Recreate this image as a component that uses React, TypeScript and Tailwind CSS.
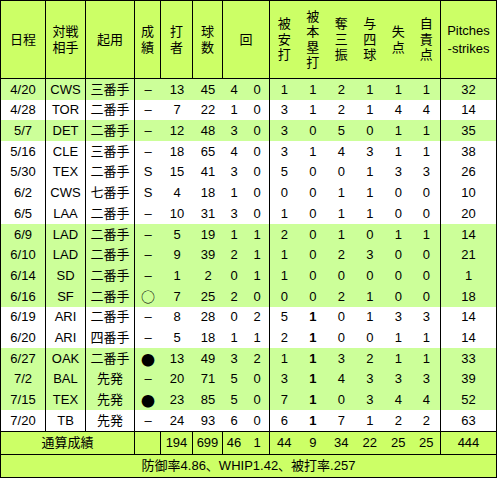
const rows: [string, string, string, string, number[], boolean][] = [
  ['4/20', 'CWS', '三番手', '–', [13, 45, 4, 0, 1, 1, 2, 1, 1, 1, 32], true],
  ['4/28', 'TOR', '二番手', '–', [7, 22, 1, 0, 3, 1, 2, 1, 4, 4, 14], false],
  ['5/7', 'DET', '二番手', '–', [12, 48, 3, 0, 3, 0, 5, 0, 1, 1, 35], true],
  ['5/16', 'CLE', '三番手', '–', [18, 65, 4, 0, 3, 1, 4, 3, 1, 1, 38], false],
  ['5/30', 'TEX', '二番手', 'S', [15, 41, 3, 0, 5, 0, 0, 1, 3, 3, 26], false],
  ['6/2', 'CWS', '七番手', 'S', [4, 18, 1, 0, 0, 0, 1, 1, 0, 0, 10], false],
  ['6/5', 'LAA', '二番手', '–', [10, 31, 3, 0, 1, 0, 1, 1, 0, 0, 20], false],
  ['6/9', 'LAD', '二番手', '–', [5, 19, 1, 1, 2, 0, 1, 0, 1, 1, 14], true],
  ['6/10', 'LAD', '二番手', '–', [9, 39, 2, 1, 1, 0, 2, 3, 0, 0, 21], true],
  ['6/14', 'SD', '二番手', '–', [1, 2, 0, 1, 1, 0, 0, 0, 0, 0, 1], true],
  ['6/16', 'SF', '二番手', '○', [7, 25, 2, 0, 0, 0, 2, 1, 0, 0, 18], true],
  ['6/19', 'ARI', '二番手', '–', [8, 28, 0, 2, 5, 1, 0, 1, 3, 3, 14], false],
  ['6/20', 'ARI', '四番手', '–', [5, 18, 1, 1, 2, 1, 0, 0, 1, 1, 14], false],
  ['6/27', 'OAK', '二番手', '●', [13, 49, 3, 2, 1, 1, 3, 2, 1, 1, 33], true],
  ['7/2', 'BAL', '先発', '–', [20, 71, 5, 0, 3, 1, 4, 3, 3, 3, 39], true],
  ['7/15', 'TEX', '先発', '●', [23, 85, 5, 0, 7, 1, 0, 3, 4, 4, 52], true],
  ['7/20', 'TB', '先発', '–', [24, 93, 6, 0, 6, 1, 7, 1, 2, 2, 63], false],
];

// columns after which a line is drawn in the body (index into the 15 cells)
const bodyLines = [0, 1, 2, 7, 13, 14];
const totalLines = [3, 4, 5, 7, 13, 14];

const heads: [string, boolean][] = [
  ['被\n安\n打', false],
  ['被\n本\n塁\n打', false],
  ['奪\n三\n振', false],
  ['与\n四\n球', false],
  ['失\n点', false],
  ['自\n責\n点', true],
];

export default function App() {
  const cell = 'flex items-center justify-center border-black';
  const head = `${cell} bg-[#ccff66] border-b whitespace-pre-line text-center leading-[15.5px]`;

  return (
    <div
      className="w-[497px] h-[478px] grid grid-cols-[45px_40px_49px_26px_32px_30px_22px_25px_repeat(6,28.5px)_56px] grid-rows-[78px_repeat(17,minmax(0,1fr))_24px_23px] border-l border-t border-black text-[13px] text-black"
      style={{ fontFamily: '"Liberation Sans", "Noto Sans CJK JP", sans-serif' }}
    >
      {/* Header */}
      <div className={`${head} border-r`}>日程</div>
      <div className={`${head} border-r`}>{'対戦\n相手'}</div>
      <div className={`${head} border-r`}>起用</div>
      <div className={`${head} border-r`}>{'成\n績'}</div>
      <div className={`${head} border-r`}>{'打\n者'}</div>
      <div className={`${head} border-r`}>{'球\n数'}</div>
      <div className={`${head} border-r col-span-2`}>回</div>
      {heads.map(([t, line]) => (
        <div key={t} className={`${head} ${line ? 'border-r' : ''}`}>
          {t}
        </div>
      ))}
      <div className={`${head} border-r leading-[18px]`}>{'Pitches\n-strikes'}</div>

      {/* Games */}
      {rows.map(([date, opp, role, res, v, green], ri) => {
        const bg = green ? 'bg-[#ccff99]' : 'bg-white';
        const cells: React.ReactNode[] = [date, opp, role, res, ...v];
        return cells.map((c, ci) => (
          <div
            key={`${ri}-${ci}`}
            className={`${cell} ${bg} ${bodyLines.includes(ci) ? 'border-r' : ''} ${
              ci === 9 && ri >= 11 ? 'font-bold' : ''
            }`}
          >
            {c === '○' || c === '●' ? (
              <span
                className="text-[14px] leading-none"
                style={{ fontFamily: '"Noto Sans CJK JP", sans-serif' }}
              >
                {c}
              </span>
            ) : (
              c
            )}
          </div>
        ));
      })}

      {/* Totals */}
      <div className={`${cell} bg-[#ccff66] border-t border-b border-r col-span-3`}>通算成績</div>
      {['', 194, 699, 46, 1, 44, 9, 34, 22, 25, 25, 444].map((c, i) => (
        <div
          key={`t${i}`}
          className={`${cell} bg-[#ccff66] border-t border-b ${totalLines.includes(i + 3) ? 'border-r' : ''}`}
        >
          {c}
        </div>
      ))}

      {/* Summary */}
      <div className={`${cell} bg-[#ccff66] border-b border-r col-span-15`}>
        防御率4.86、WHIP1.42、被打率.257
      </div>
    </div>
  );
}
